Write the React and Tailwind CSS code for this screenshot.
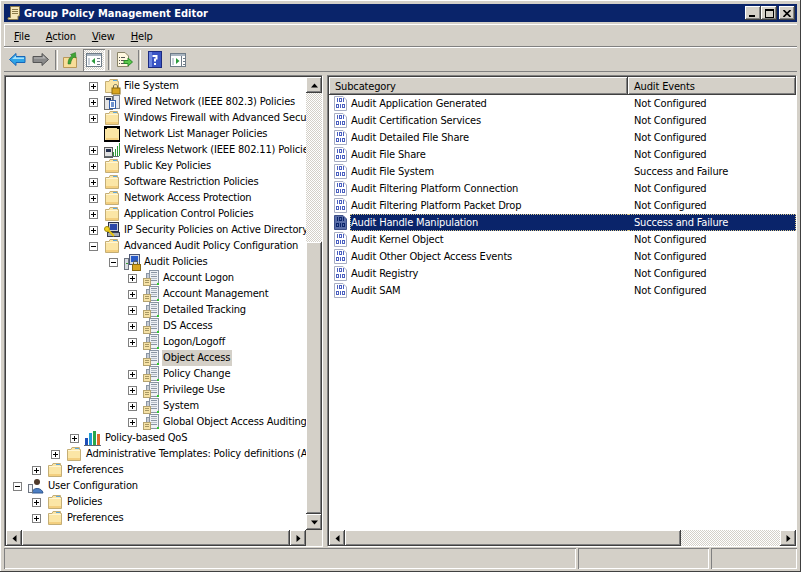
const raised =
  "shadow-[inset_-1px_-1px_0_#404040,inset_1px_1px_0_#ffffff,inset_-2px_-2px_0_#808080,inset_2px_2px_0_#d4d0c8]";
const dither = "bg-[repeating-conic-gradient(#d4d0c8_0_25%,#ffffff_0_50%)] bg-[length:2px_2px]";

const indent = [
  "pl-[7px]",
  "pl-[26px]",
  "pl-[45px]",
  "pl-[64px]",
  "pl-[83px]",
  "pl-[103px]",
  "pl-[122px]",
];

function Px({ children, size = 16, className = "" }) {
  return (
    <svg width={size} height={size} viewBox={`0 0 ${size} ${size}`} className={`shrink-0 ${className}`}>
      {children}
    </svg>
  );
}

function FolderIcon() {
  return (
    <Px>
      <path d="M1.5 3.5 H5 L6 1.5 H13.5 V3.5 H14.5 V14.5 H1.5 Z" fill="#fbe6a6" stroke="#c4ae76" />
      <rect x="9" y="2" width="4" height="1" fill="#5fa8dc" />
      <rect x="2" y="4" width="12" height="1" fill="#fff6d5" />
      <rect x="2" y="12" width="12" height="2" fill="#f3cf7f" />
    </Px>
  );
}

function FolderLockIcon() {
  return (
    <Px size={17}>
      <path d="M1.5 3.5 H5 L6 1.5 H13.5 V3.5 H14.5 V14.5 H1.5 Z" fill="#fbe6a6" stroke="#c4ae76" />
      <rect x="9" y="2" width="4" height="1" fill="#5fa8dc" />
      <path d="M9.5 10 V8 C9.5 6 13.5 6 13.5 8 V10" fill="none" stroke="#6b6b5a" />
      <rect x="8" y="10" width="8" height="6" fill="#d9a520" stroke="#8a6a10" />
    </Px>
  );
}

function BlackFolderIcon() {
  return (
    <Px>
      <rect width="16" height="16" fill="#000" />
      <rect x="1" y="3" width="14" height="11" fill="#fbe6a6" />
      <rect x="3" y="2" width="10" height="1" fill="#fbe6a6" />
      <rect x="2" y="12" width="12" height="2" fill="#f3cf7f" />
    </Px>
  );
}

function WiredIcon() {
  return (
    <Px>
      <rect x="0.5" y="2.5" width="8" height="13" fill="#e4e4e4" stroke="#6a6a6a" />
      <rect x="2" y="4" width="5" height="2" fill="#23304f" />
      <rect x="9.5" y="1.5" width="6" height="13" fill="#e6e9ee" stroke="#7d8490" />
      <rect x="5.5" y="6.5" width="6" height="8" fill="#ffffff" stroke="#355fa8" />
      <rect x="7" y="8" width="3" height="5" fill="#6f93cf" />
    </Px>
  );
}

function WirelessIcon() {
  return (
    <Px>
      <rect x="0.5" y="5.5" width="8" height="10" fill="#e0e0e0" stroke="#5a5a5a" />
      <rect x="2" y="7" width="5" height="3" fill="#23304f" />
      <rect x="9" y="10" width="1" height="4" fill="#2f9a3a" />
      <rect x="11" y="7" width="1" height="7" fill="#2f9a3a" />
      <rect x="13" y="4" width="1" height="10" fill="#2f9a3a" />
      <rect x="15" y="1" width="1" height="13" fill="#2f9a3a" />
      <rect x="1" y="14" width="14" height="1" fill="#5f6a70" />
    </Px>
  );
}

function IpSecIcon() {
  return (
    <Px>
      <rect x="4.5" y="0.5" width="10" height="9" fill="#c9ced6" stroke="#2a2f45" />
      <rect x="6" y="2" width="7" height="6" fill="#2a46a8" />
      <rect x="3.5" y="10.5" width="12" height="4" fill="#a8adb8" stroke="#3a3f50" />
      <circle cx="3" cy="7" r="2.5" fill="#f3d31f" stroke="#a08a10" />
      <path d="M4 8 L10 14" stroke="#e6c20f" strokeWidth="2" />
    </Px>
  );
}

function AuditRootIcon() {
  return (
    <Px size={17}>
      <rect x="0.5" y="4.5" width="4" height="11" fill="#d8dce2" stroke="#6d7480" />
      <rect x="2" y="9" width="2" height="1" fill="#3aa03a" />
      <rect x="5.5" y="0.5" width="10" height="10" fill="#d5dcea" stroke="#4b5675" />
      <rect x="7" y="2" width="7" height="6" fill="#2a5bc8" />
      <path d="M9.5 10 V8.5 C9.5 6.5 13.5 6.5 13.5 8.5 V10" fill="none" stroke="#6b5a20" />
      <rect x="8.5" y="10.5" width="8" height="6" fill="#d9a520" stroke="#8a6a10" />
    </Px>
  );
}

function ServerPolicyIcon() {
  return (
    <Px>
      <rect x="6.5" y="0.5" width="9" height="14" fill="#eef1f4" stroke="#8a95a3" />
      <rect x="8" y="2" width="6" height="1" fill="#8a95a3" />
      <rect x="8" y="4" width="6" height="1" fill="#b5bdc7" />
      <rect x="8" y="6" width="6" height="1" fill="#8a95a3" />
      <rect x="8" y="8" width="6" height="1" fill="#b5bdc7" />
      <rect x="8" y="10" width="6" height="1" fill="#8a95a3" />
      <rect x="3.5" y="3.5" width="3" height="6" fill="#c6ccd4" stroke="#8a95a3" />
      <rect x="0.5" y="8.5" width="7" height="7" fill="#f6e2a6" stroke="#b5a36f" />
      <rect x="2" y="10" width="4" height="1" fill="#a89862" />
      <rect x="2" y="12" width="4" height="1" fill="#a89862" />
      <rect x="14" y="13" width="2" height="2" fill="#32c832" />
    </Px>
  );
}

function QosIcon() {
  return (
    <Px size={18}>
      <rect x="1" y="9" width="3" height="7" fill="#1f4fb8" />
      <rect x="5" y="4" width="3" height="12" fill="#1e9ad6" />
      <rect x="9" y="2" width="3" height="14" fill="#2aa84a" />
      <rect x="13" y="5" width="3" height="11" fill="#e06a2a" />
      <rect x="0" y="16" width="17" height="1" fill="#5d6675" />
    </Px>
  );
}

function UserConfigIcon() {
  return (
    <Px>
      <circle cx="9" cy="4" r="3" fill="#4f3a2a" />
      <path d="M4 15 C4 9 14 9 15 15 Z" fill="#4d7fc4" stroke="#2e568f" />
      <rect x="0.5" y="6.5" width="4" height="8" fill="#f2f4f8" stroke="#6d7480" />
    </Px>
  );
}

function BinaryIcon({ selected }) {
  const ink = selected ? "#0a246a" : "#4a5fc0";
  const digit = (x, y, one) =>
    one ? (
      <rect key={`${x}-${y}`} x={x} y={y} width="1" height="4" fill={ink} />
    ) : (
      <rect key={`${x}-${y}`} x={x - 0.5} y={y + 0.5} width="2" height="3" fill="none" stroke={ink} strokeWidth="1" />
    );
  return (
    <svg width="13" height="15" viewBox="0 0 13 15" className="shrink-0">
      <path
        d="M0.5 0.5 H9 L12.5 4 V14.5 H0.5 Z"
        fill={selected ? "#5a6ea8" : "#ffffff"}
        stroke={selected ? "#3c4f88" : "#a8aec4"}
      />
      {[digit(3, 2, true), digit(6, 2, false), digit(9, 2, true), digit(3, 8, false), digit(6, 8, true), digit(9, 8, false)]}
    </svg>
  );
}

const icons = {
  folder: FolderIcon,
  lock: FolderLockIcon,
  black: BlackFolderIcon,
  wired: WiredIcon,
  wireless: WirelessIcon,
  ipsec: IpSecIcon,
  audit: AuditRootIcon,
  server: ServerPolicyIcon,
  qos: QosIcon,
  user: UserConfigIcon,
};

const treeRows = [
  { level: 4, text: "File System", icon: "lock", box: "plus" },
  { level: 4, text: "Wired Network (IEEE 802.3) Policies", icon: "wired", box: "plus" },
  { level: 4, text: "Windows Firewall with Advanced Security", icon: "folder", box: "plus" },
  { level: 4, text: "Network List Manager Policies", icon: "black" },
  { level: 4, text: "Wireless Network (IEEE 802.11) Policies", icon: "wireless", box: "plus" },
  { level: 4, text: "Public Key Policies", icon: "folder", box: "plus" },
  { level: 4, text: "Software Restriction Policies", icon: "folder", box: "plus" },
  { level: 4, text: "Network Access Protection", icon: "folder", box: "plus" },
  { level: 4, text: "Application Control Policies", icon: "folder", box: "plus" },
  { level: 4, text: "IP Security Policies on Active Directory (Contoso)", icon: "ipsec", box: "plus" },
  { level: 4, text: "Advanced Audit Policy Configuration", icon: "folder", box: "minus" },
  { level: 5, text: "Audit Policies", icon: "audit", box: "minus" },
  { level: 6, text: "Account Logon", icon: "server", box: "plus" },
  { level: 6, text: "Account Management", icon: "server", box: "plus" },
  { level: 6, text: "Detailed Tracking", icon: "server", box: "plus" },
  { level: 6, text: "DS Access", icon: "server", box: "plus" },
  { level: 6, text: "Logon/Logoff", icon: "server", box: "plus" },
  { level: 6, text: "Object Access", icon: "server", selected: true },
  { level: 6, text: "Policy Change", icon: "server", box: "plus" },
  { level: 6, text: "Privilege Use", icon: "server", box: "plus" },
  { level: 6, text: "System", icon: "server", box: "plus" },
  { level: 6, text: "Global Object Access Auditing", icon: "server", box: "plus" },
  { level: 3, text: "Policy-based QoS", icon: "qos", box: "plus" },
  { level: 2, text: "Administrative Templates: Policy definitions (ADMX files)", icon: "folder", box: "plus" },
  { level: 1, text: "Preferences", icon: "folder", box: "plus" },
  { level: 0, text: "User Configuration", icon: "user", box: "minus" },
  { level: 1, text: "Policies", icon: "folder", box: "plus" },
  { level: 1, text: "Preferences", icon: "folder", box: "plus" },
];

const auditRows = [
  ["Audit Application Generated", "Not Configured"],
  ["Audit Certification Services", "Not Configured"],
  ["Audit Detailed File Share", "Not Configured"],
  ["Audit File Share", "Not Configured"],
  ["Audit File System", "Success and Failure"],
  ["Audit Filtering Platform Connection", "Not Configured"],
  ["Audit Filtering Platform Packet Drop", "Not Configured"],
  ["Audit Handle Manipulation", "Success and Failure"],
  ["Audit Kernel Object", "Not Configured"],
  ["Audit Other Object Access Events", "Not Configured"],
  ["Audit Registry", "Not Configured"],
  ["Audit SAM", "Not Configured"],
];

function Expander({ type }) {
  if (!type) return <div className="w-[9px] h-[9px] shrink-0" />;
  return (
    <div className="relative w-[9px] h-[9px] shrink-0 border border-[#808080] bg-white">
      <div className="absolute left-[1px] top-[3px] w-[5px] h-[1px] bg-black" />
      {type === "plus" && <div className="absolute left-[3px] top-[1px] w-[1px] h-[5px] bg-black" />}
    </div>
  );
}

function TreeRow({ row }) {
  const Icon = icons[row.icon];
  return (
    <div className={`flex items-center h-4 ${indent[row.level]}`}>
      <Expander type={row.box} />
      <div className="w-[20px] ml-[4px] flex justify-center shrink-0">
        <Icon />
      </div>
      <span className={`ml-[1px] px-[1px] leading-4 whitespace-nowrap ${row.selected ? "bg-[#d4d0c8] pr-[2px]" : ""}`}>
        {row.text}
      </span>
    </div>
  );
}

function Arrow({ dir }) {
  const shapes = {
    up: "M0 4 L3.5 0 L7 4 Z",
    down: "M0 0 H7 L3.5 4 Z",
    left: "M4 0 V7 L0 3.5 Z",
    right: "M0 0 V7 L4 3.5 Z",
  };
  return (
    <svg width="7" height="7" viewBox="0 0 7 7" className="block">
      <path d={shapes[dir]} fill="#000" transform={dir === "up" || dir === "down" ? "translate(0 1.5)" : "translate(1.5 0)"} />
    </svg>
  );
}

function ScrollButton({ dir }) {
  return (
    <div className={`w-4 h-4 shrink-0 bg-[#d4d0c8] flex items-center justify-center ${raised}`}>
      <Arrow dir={dir} />
    </div>
  );
}

function Separator() {
  return <div className="w-[2px] h-[20px] mx-[3px] border-l border-[#808080] shrink-0 shadow-[1px_0_0_#ffffff]" />;
}

function PaneIcon({ arrowLeft }) {
  return (
    <svg width="16" height="14" viewBox="0 0 16 14">
      <rect x="0.5" y="0.5" width="15" height="13" fill="#ffffff" stroke="#6f7c88" />
      <rect x="1" y="1" width="14" height="2" fill="#a8b4c0" />
      {arrowLeft ? (
        <>
          <path d="M9 5 V11 L5.5 8 Z" fill="#2a9a3a" />
          <rect x="11" y="5" width="3" height="1" fill="#6f7c88" />
          <rect x="11" y="8" width="3" height="1" fill="#6f7c88" />
          <rect x="11" y="11" width="3" height="1" fill="#6f7c88" />
          <rect x="2" y="5" width="2" height="7" fill="#c8d0d8" />
        </>
      ) : (
        <>
          <path d="M6 5 V11 L9.5 8 Z" fill="#2a9a3a" />
          <rect x="11" y="3" width="1" height="10" fill="#6f7c88" />
          <rect x="13" y="5" width="2" height="1" fill="#6f7c88" />
          <rect x="13" y="8" width="2" height="1" fill="#6f7c88" />
          <rect x="13" y="11" width="2" height="1" fill="#6f7c88" />
          <rect x="2" y="5" width="2" height="7" fill="#c8d0d8" />
        </>
      )}
    </svg>
  );
}

function Toolbar() {
  return (
    <div className="h-[24px] flex items-center pl-[2px] border-b border-[#808080] shadow-[0_-1px_0_#ffffff]">
      <div className="w-[23px] flex justify-center">
        <svg width="17" height="13" viewBox="0 0 17 13">
          <path d="M0.5 6.5 L7 0.5 V3.5 H16 V9.5 H7 V12.5 Z" fill="#2fa5e8" stroke="#1866b8" />
          <path d="M3 6 L7 2.5 V4.5 H15 V6 Z" fill="#a6e0fa" />
        </svg>
      </div>
      <div className="w-[23px] flex justify-center">
        <svg width="17" height="13" viewBox="0 0 17 13">
          <path d="M16.5 6.5 L10 0.5 V3.5 H1 V9.5 H10 V12.5 Z" fill="#8a8a8a" stroke="#555555" />
          <path d="M2 4.5 H11 V2.5 L14 5.5 H2 Z" fill="#b8b8b8" />
        </svg>
      </div>
      <Separator />
      <div className="w-[22px] flex justify-center">
        <svg width="16" height="16" viewBox="0 0 16 16">
          <path d="M0.5 5.5 H13.5 V15.5 H0.5 Z" fill="#f8dd98" stroke="#b9985a" />
          <path d="M5 12 C5 7 7 5 9 4 L7.5 2.5 L12.5 0.5 L13 6 L11 5 C9 6.5 8 9 7.5 12 Z" fill="#3fa535" stroke="#1f6f1f" strokeWidth="0.5" />
        </svg>
      </div>
      <div className={`w-[22px] h-[22px] ml-[1px] flex items-center justify-center ${dither} shadow-[inset_1px_1px_0_#808080,inset_-1px_-1px_0_#ffffff]`}>
        <PaneIcon arrowLeft />
      </div>
      <Separator />
      <div className="w-[22px] flex justify-center">
        <svg width="17" height="16" viewBox="0 0 17 16">
          <path d="M1.5 0.5 H9 L12.5 4 V14.5 H1.5 Z" fill="#fff8e0" stroke="#8a8468" />
          <rect x="3" y="5" width="1" height="1" fill="#555" />
          <rect x="5" y="5" width="4" height="1" fill="#555" />
          <rect x="3" y="8" width="1" height="1" fill="#555" />
          <rect x="5" y="8" width="3" height="1" fill="#555" />
          <rect x="3" y="11" width="1" height="1" fill="#555" />
          <rect x="5" y="11" width="3" height="1" fill="#555" />
          <path d="M8 8.5 H12 V6 L16.5 10 L12 14 V11.5 H8 Z" fill="#5cc84a" stroke="#2a8a2a" />
        </svg>
      </div>
      <Separator />
      <div className="w-[24px] flex justify-center">
        <svg width="14" height="17" viewBox="0 0 14 17">
          <rect x="0.5" y="0.5" width="13" height="16" fill="#3a54c4" stroke="#1c2a80" />
          <rect x="1" y="1" width="3" height="15" fill="#6d86e0" />
          <path d="M4.5 6 V4 H9.5 V8.5 H8 V10.5 H6 V7.5 H7.5 V6 Z" fill="#ffffff" />
          <rect x="6" y="12" width="2" height="2" fill="#ffffff" />
        </svg>
      </div>
      <div className="w-[20px] ml-[1px] flex justify-center">
        <PaneIcon />
      </div>
    </div>
  );
}

function WindowButton({ children, ml = "" }) {
  return (
    <div className={`w-[16px] h-[14px] bg-[#d4d0c8] flex items-center justify-center ${raised} ${ml}`}>
      {children}
    </div>
  );
}

export default function App() {
  return (
    <div
      className="w-[801px] h-[572px] overflow-hidden bg-[#d4d0c8] flex flex-col p-[4px] pb-[3px] text-black text-[11px] tracking-[-0.16px] shadow-[inset_-1px_-1px_0_#404040,inset_1px_1px_0_#ffffff]"
      style={{ fontFamily: '"DejaVu Sans Condensed", "DejaVu Sans", Tahoma, sans-serif' }}
    >
      {/* Title bar */}
      <div className="h-[18px] shrink-0 bg-[#0a246a] flex items-center pl-[3px] pr-[2px]">
        <svg width="14" height="16" viewBox="0 0 14 16" className="shrink-0">
          <path d="M3.5 1.5 H12.5 V11 H11 V14.5 H2 C0.5 14.5 0.5 12.5 2 12.5 H3.5 Z" fill="#f5e6b8" stroke="#8a7a4a" />
          <rect x="5" y="4" width="6" height="1" fill="#8a7a4a" />
          <rect x="5" y="6" width="6" height="1" fill="#8a7a4a" />
          <rect x="5" y="8" width="6" height="1" fill="#8a7a4a" />
        </svg>
        <span className="ml-[3px] text-white font-bold leading-none tracking-normal whitespace-nowrap">Group Policy Management Editor</span>
        <div className="ml-auto flex items-center">
          <WindowButton>
            <div className="w-[6px] h-[2px] bg-black mt-[6px] mr-[2px]" />
          </WindowButton>
          <WindowButton>
            <div className="w-[9px] h-[9px] border border-black border-t-2" />
          </WindowButton>
          <WindowButton ml="ml-[2px]">
            <svg width="8" height="7" viewBox="0 0 8 7">
              <path d="M0.5 0 L7.5 7 M7.5 0 L0.5 7" stroke="#000" strokeWidth="1.6" />
            </svg>
          </WindowButton>
        </div>
      </div>

      {/* Menu bar */}
      <div className="mt-[2px] shrink-0 h-[23px] flex items-center pl-[10px] pt-[3px] gap-[16px] border-t border-white border-b border-b-[#808080] shadow-[inset_1px_0_0_#ffffff]">
        <span><span className="underline">F</span>ile</span>
        <span><span className="underline">A</span>ction</span>
        <span><span className="underline">V</span>iew</span>
        <span><span className="underline">H</span>elp</span>
      </div>

      <div className="mt-[1px] shrink-0">
        <Toolbar />
      </div>

      {/* Panes */}
      <div className="mt-[3px] flex-1 min-h-0 flex">
        {/* Tree pane */}
        <div className="w-[318px] shrink-0 flex flex-col border-t border-l border-[#808080] shadow-[inset_1px_1px_0_#404040,1px_1px_0_#ffffff]">
          <div className="flex-1 min-h-0 flex pl-[1px] pt-[1px]">
            <div className="flex-1 min-w-0 overflow-hidden bg-white pt-[1px]">
              {treeRows.map((row, i) => (
                <TreeRow key={i} row={row} />
              ))}
            </div>
            <div className="w-[16px] shrink-0 flex flex-col">
              <ScrollButton dir="up" />
              <div className={`h-[149px] ${dither}`} />
              <div className={`flex-1 bg-[#d4d0c8] ${raised}`} />
              <ScrollButton dir="down" />
            </div>
          </div>
          <div className="h-[16px] shrink-0 flex ml-[1px] mr-[16px]">
            <ScrollButton dir="left" />
            <div className={`flex-1 bg-[#d4d0c8] ${raised}`} />
            <ScrollButton dir="right" />
          </div>
        </div>

        {/* Splitter */}
        <div className="w-[5px] shrink-0" />

        {/* List pane */}
        <div className="flex-1 min-w-0 flex flex-col border-t border-l border-[#808080] shadow-[inset_1px_1px_0_#404040,1px_1px_0_#ffffff] mr-[1px]">
          <div className="flex-1 min-h-0 ml-[1px] mt-[1px] bg-white overflow-hidden">
            <div className="flex h-[18px]">
              <div className={`w-[299px] pl-[6px] bg-[#d4d0c8] leading-[19px] ${raised}`}>Subcategory</div>
              <div className={`flex-1 pl-[6px] bg-[#d4d0c8] leading-[19px] ${raised}`}>Audit Events</div>
            </div>
            {auditRows.map(([name, status]) => {
              const selected = name === "Audit Handle Manipulation";
              return (
                <div key={name} className="flex items-center h-[17px]">
                  <div className="w-[299px] pl-[5px] flex items-center shrink-0">
                    <BinaryIcon selected={selected} />
                    <span
                      className={`ml-[3px] whitespace-nowrap ${
                        selected
                          ? "h-[17px] flex-1 text-white bg-[#0a246a] leading-[15px] border-y border-l border-dotted border-[#d8c88a]"
                          : "px-[1px] leading-[17px]"
                      }`}
                    >
                      {name}
                    </span>
                  </div>
                  <div
                    className={`flex-1 pl-[6px] ${
                      selected
                        ? "h-[17px] text-white bg-[#0a246a] leading-[15px] border-y border-r border-dotted border-[#d8c88a]"
                        : "leading-[17px]"
                    }`}
                  >
                    {status}
                  </div>
                </div>
              );
            })}
          </div>
          <div className="h-[16px] shrink-0 flex ml-[1px]">
            <ScrollButton dir="left" />
            <div className={`w-[336px] bg-[#d4d0c8] ${raised}`} />
            <div className={`flex-1 ${dither}`} />
            <ScrollButton dir="right" />
          </div>
        </div>
      </div>

      {/* Status bar */}
      <div className="mt-[2px] h-[21px] shrink-0 flex gap-[2px]">
        <div className="w-[572px] border-t border-l border-[#808080] shadow-[inset_-1px_-1px_0_#ffffff]" />
        <div className="w-[131px] border-t border-l border-[#808080] shadow-[inset_-1px_-1px_0_#ffffff]" />
        <div className="flex-1 border-t border-l border-[#808080] shadow-[inset_-1px_-1px_0_#ffffff]" />
      </div>
    </div>
  );
}
